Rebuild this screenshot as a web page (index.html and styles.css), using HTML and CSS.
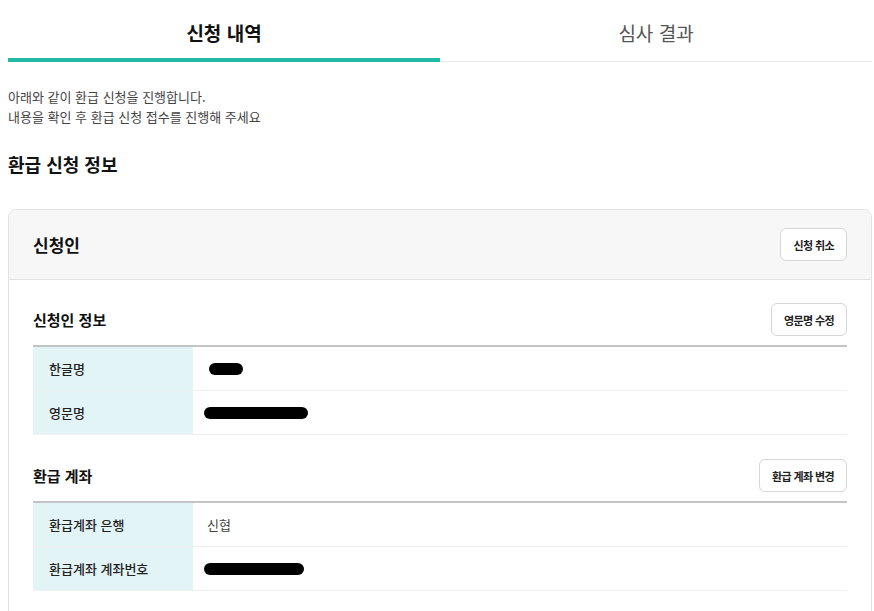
FILE: index.html
```html
<!DOCTYPE html>
<html lang="ko">
<head>
<meta charset="utf-8">
<link rel="stylesheet" href="styles.css">
</head>
<body>
<div class="page">
  <nav class="tabs">
    <div class="tab active">신청 내역</div>
    <div class="tab">심사 결과</div>
  </nav>
  <p class="desc">아래와 같이 환급 신청을 진행합니다.<br>내용을 확인 후 환급 신청 접수를 진행해 주세요</p>
  <h2 class="title">환급 신청 정보</h2>
  <section class="card">
    <header class="card-head">
      <h3>신청인</h3>
      <button class="btn">신청 취소</button>
    </header>
    <div class="card-body">
      <div class="sub-head">
        <h4>신청인 정보</h4>
        <button class="btn">영문명 수정</button>
      </div>
      <div class="table">
        <div class="row"><div class="th">한글명</div><div class="td"><span class="mask m1"></span></div></div>
        <div class="row"><div class="th">영문명</div><div class="td"><span class="mask m2"></span></div></div>
      </div>
      <div class="sub-head second">
        <h4>환급 계좌</h4>
        <button class="btn">환급 계좌 변경</button>
      </div>
      <div class="table">
        <div class="row"><div class="th">환급계좌 은행</div><div class="td">신협</div></div>
        <div class="row"><div class="th">환급계좌 계좌번호</div><div class="td"><span class="mask m3"></span></div></div>
      </div>
    </div>
  </section>
</div>
</body>
</html>
```
FILE: styles.css
```css
* { box-sizing: border-box; }
html, body { margin: 0; padding: 0; background: #fff; }
body {
  font-family: "Noto Sans CJK KR", "Noto Sans", sans-serif;
  color: #222;
}
.page { padding: 0 2px 0 8px; }
.tabs {
  display: flex;
  border-bottom: 1px solid #e8e8e8;
  height: 62px;
}
.tab {
  flex: 1;
  text-align: center;
  font-size: 19px;
  line-height: 20px;
  padding-top: 23px;
  color: #555;
}
.tab.active {
  font-weight: 700;
  color: #111;
  border-bottom: 4px solid #1fb9a6;
  height: 62px;
}
.desc {
  margin: 25px 0 0;
  font-size: 13px;
  line-height: 20px;
  color: #444;
}
.title {
  margin: 24px 0 0;
  font-size: 18px;
  line-height: 26px;
  font-weight: 700;
  color: #111;
}
.card {
  margin-top: 32px;
  border: 1px solid #e3e3e3;
  border-radius: 8px;
  overflow: hidden;
  padding-bottom: 40px;
}
.card-head {
  display: flex;
  align-items: center;
  justify-content: space-between;
  background: #f7f7f7;
  border-bottom: 1px solid #e3e3e3;
  height: 70px;
  padding: 0 24px 0 24px;
}
.card-head h3 {
  margin: 0;
  font-size: 17px;
  font-weight: 700;
  color: #111;
}
.btn {
  font-family: inherit;
  font-size: 11px;
  letter-spacing: -0.6px;
  font-weight: 700;
  color: #222;
  background: #fff;
  border: 1px solid #d6d6d6;
  border-radius: 6px;
  height: 33px;
  padding: 0 12px;
}
.card-body { padding: 0 24px; }
.sub-head {
  display: flex;
  align-items: center;
  justify-content: space-between;
  padding-top: 23px;
  padding-bottom: 9px;
}
.sub-head.second { padding-top: 24px; }
.sub-head h4 {
  margin: 0;
  font-size: 15px;
  font-weight: 700;
  color: #111;
}
.table { border-top: 2px solid #c4c4c4; }
.row {
  display: flex;
  border-bottom: 1px solid #f0f0f0;
  height: 44px;
}
.th {
  width: 160px;
  background: #e3f4f7;
  padding-left: 16px;
  display: flex;
  align-items: center;
  font-size: 13px;
  font-weight: 500;
  color: #222;
}
.td {
  flex: 1;
  padding-left: 14px;
  display: flex;
  align-items: center;
  font-size: 13px;
  color: #444;
}
.mask { display: inline-block; background: #000; border-radius: 7px; }
.m1 { width: 34px; height: 12px; margin-left: 2px; }
.m2 { width: 104px; height: 12px; margin-left: -3px; }
.m3 { width: 100px; height: 12px; margin-left: -3px; }
```
